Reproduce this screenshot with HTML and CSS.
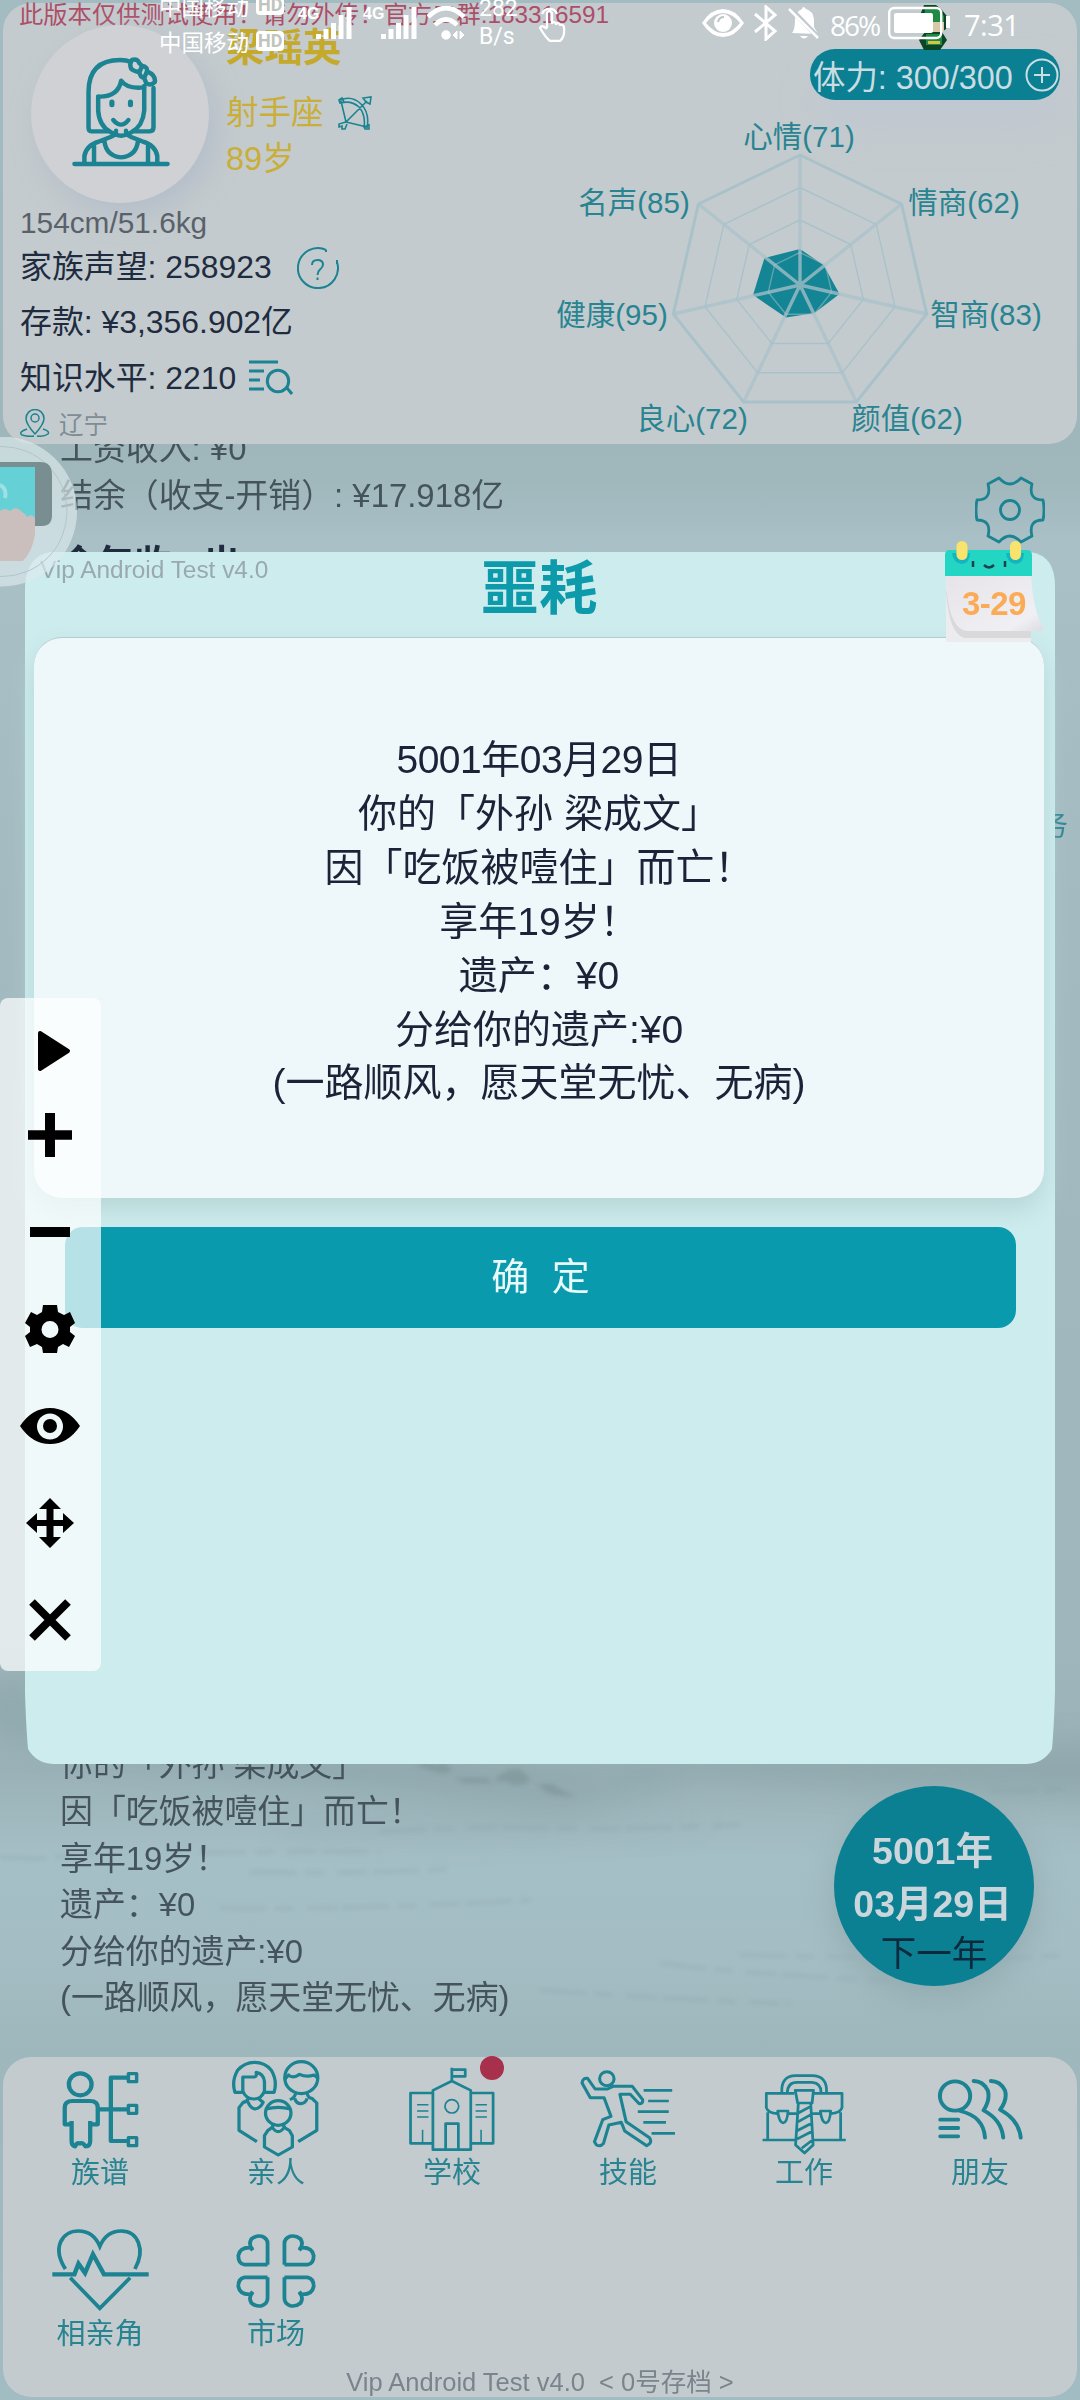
FILE: index.html
```html
<!DOCTYPE html>
<html lang="zh-CN">
<head>
<meta charset="utf-8">
<title>噩耗</title>
<link rel="stylesheet" href="styles.css">
</head>
<body>
<div class="app">
  <svg class="scenery" viewBox="0 1650 1080 420" preserveAspectRatio="none">
    <defs>
      <filter id="mist" x="-20%" y="-60%" width="140%" height="220%"><feGaussianBlur stdDeviation="14"/></filter>
      <filter id="ink" x="-20%" y="-60%" width="140%" height="220%"><feGaussianBlur stdDeviation="2"/></filter>
    </defs>
    <g filter="url(#mist)" fill="#829ca1" opacity=".4">
      <path d="M-40 1690L30 1670L60 1740L400 1755Q560 1760 700 1785L560 1812Q380 1790 250 1775L0 1740Z"/>
      <path d="M620 1755Q900 1750 1120 1740V1800Q850 1790 620 1770Z"/>
      <path d="M280 1815Q440 1800 720 1822Q560 1850 280 1835Z" opacity=".4"/>
    </g>
    <g filter="url(#ink)" fill="#74898e" opacity=".42">
      <path d="M415 1765l12-3 8 3 8-3 9 6-4 5h-10l-8-3z"/><path d="M496 1777l8-4 6-4 10 0 6 5 4 6-5 4-12 1-8-4-8 1z"/><path d="M455 1778h30l10 5h-30z"/><path d="M538 1784h14l6 4 18 9-22-2-8-3z"/>
    </g>
    <g fill="none" stroke="#829aa0" stroke-width="2.500" opacity=".32" filter="url(#ink)" stroke-dasharray="46 9 18 14 30 6">
      <path d="M380 1832q80-6 160-4t200-3M200 1853q90-2 180-1M0 1857q50 4 90-4M250 1872q120 2 210-4M220 1908q150 2 310-8M740 1955q90 2 190 3t140-4M660 1963q70 10 230 18M540 1990q110 8 250 14M990 1790q40 2 80-2"/>
    </g>
  </svg>

  <header class="card profile">
    <p class="notice">此版本仅供测试使用！请勿外传！官方二群:183316591</p>
    <div class="profile-body">
      <section class="facts">
        <div class="identity">
          <div class="avatar">
            <svg viewBox="203 165 288 330" preserveAspectRatio="none" fill="none" stroke="#1b8391" stroke-width="13" stroke-linecap="round" stroke-linejoin="round">
              <path d="M213 486H484M242 484V462Q248 428 286 418L318 405Q335 398 334 386M454 484V462Q448 428 410 418L378 405Q362 398 363 386M270 432V482M427 432V482M300 416Q305 462 349 466Q393 462 398 416"/>
              <path d="M282 284V326Q285 372 318 390Q348 412 380 390Q412 372 416 326V252"/>
              <path d="M282 284Q340 286 349 236Q366 262 416 256M310 388H262Q254 388 254 376V270Q254 174 346 174Q364 174 378 180M388 388H432Q443 388 443 376V258"/>
              <path d="M380 174Q396 168 402 184L410 192Q426 194 424 208Q450 220 447 240Q436 252 422 244L416 228Q404 226 402 210Q386 208 378 200Q372 184 380 174M402 210L410 192M416 228L424 208"/>
              <path d="M322 300V308M376 300V308" stroke-width="15"/><path d="M326 354Q349 382 370 354"/>
            </svg>
          </div>
          <div class="who">
            <h1>梁瑶英</h1>
            <p>射手座 <svg class="zodiac" viewBox="0 0 34 34" fill="none" stroke="#1b8391" stroke-width="1.6"><path d="M2 4Q14-1 23 8Q32 17 29 32M3 7Q13 4 21 11Q28 19 26 32M3 5L8 26M8 26L29 5M8 26L29 31M28 6L25 2L33 1L32 8ZM8 26L1 28L1 31L4 30L4 33L7 33L9 28M1 4L4 2L6 6L2 7ZM26 31L31 29L31 33L27 33Z"/></svg></p>
            <p>89岁</p>
          </div>
        </div>
        <p class="body-size">154cm/51.6kg</p>
        <p class="fact">家族声望: 258923 <svg class="help" viewBox="0 0 42 42" fill="none" stroke="#1b8391" stroke-width="2"><path d="M29 2.8A20 20 0 1 0 40 15M29 2.8V5M40 13V17"/><path d="M15 18Q15 13 20.500 13Q26 13 26 17.500Q26 20 23 22.500Q20.500 24.500 20.500 28M20.500 30.500V33"/></svg></p>
        <p class="fact">存款: ¥3,356.902亿</p>
        <p class="fact">知识水平: 2210 <svg class="lookup" viewBox="0 0 44 36" fill="none" stroke="#1b8391" stroke-width="3"><path d="M0 2H29M0 11H15M0 20H11M0 29H15M38 28L43 34"/><circle cx="29" cy="21" r="10.700"/></svg></p>
        <p class="place"><svg viewBox="0 0 30 28" fill="none" stroke="#1b8391" stroke-width="1.500"><path d="M15 25Q6 15 6 9.500A9 9 0 0 1 24 9.500Q24 15 15 25Z"/><circle cx="15" cy="9" r="4"/><path d="M7 20Q-2 23 2 26Q8 28 14 27M17 27Q24 28 28 25Q30 22 23 20"/></svg>辽宁</p>
      </section>
      <section class="stats">
        <div class="energy">体力: 300/300
          <svg viewBox="0 0 34 34" fill="none" stroke="#c9dde2" stroke-width="2"><circle cx="17" cy="17" r="15.500"/><path d="M17 9V25M9 17H25"/></svg>
        </div>
        <svg class="radar" viewBox="540 100 536 344">
          <path d="M801 249L824.500 265L840.500 294L815.500 313L787 317.500L754 295L765.500 258Z" fill="#148594"/>
          <g fill="none" stroke="#a9c2ca" stroke-linejoin="round">
            <path stroke-width="3" d="M801 155L902.600 204L927.700 314L857.400 402H744.600L674.300 314L699.400 204Z"/>
            <path stroke-width="1.400" d="M801 187.500L877.200 224.300L896 306.700L843.300 372.800H758.700L706 306.700L724.800 224.300ZM801 220L851.800 244.500L864.400 299.500L829.200 343.500H772.800L737.700 299.500L750.200 244.500Z"/>
            <path stroke-width="1.400" opacity=".5" d="M801 252.500L826.400 264.800L832.700 292.200L815.100 314.300H786.900L769.300 292.200L775.600 264.800Z"/>
            <path stroke-width="3.400" opacity=".75" d="M801 285V155M801 285L902.600 204M801 285L927.700 314M801 285L857.400 402M801 285L744.600 402M801 285L674.300 314M801 285L699.400 204"/>
          </g>
          <g class="radar-labels" text-anchor="middle">
            <text x="800" y="147">心情(71)</text><text x="635" y="213">名声(85)</text><text x="965" y="213">情商(62)</text>
            <text x="613" y="325">健康(95)</text><text x="987" y="325">智商(83)</text><text x="693" y="429">良心(72)</text><text x="908" y="429">颜值(62)</text>
          </g>
        </svg>
      </section>
    </div>
  </header>

  <main class="feed">
    <div class="log income">
      <p>工资收入: ¥0</p>
      <p>结余（收支-开销）: ¥17.918亿</p>
      <p class="log-title">今年收 出</p>
    </div>
    <div class="log obituary">
      <p>你的「外孙 梁成文」</p>
      <p>因「吃饭被噎住」而亡！</p>
      <p>享年19岁！</p>
      <p>遗产：¥0</p>
      <p>分给你的遗产:¥0</p>
      <p>(一路顺风，愿天堂无忧、无病)</p>
    </div>
    <span class="side-task">任务</span>
    <svg class="settings" viewBox="-35 -35 70 70" fill="none" stroke="#1b8391" stroke-width="2.800" stroke-linejoin="round"><path d="M-11-32Q0-20 11-32L22-26Q18-10 33-10Q35 0 33 10Q18 10 22 26L11 32Q0 20-11 32L-22 26Q-18 10-33 10Q-35 0-33-10Q-18-10-22-26Z"/><circle r="9.500"/></svg>
    <div class="next-year"><b>5001年</b><b>03月29日</b><span>下一年</span></div>
  </main>

  <nav class="card menu">
    <div class="menu-grid">
      <div class="item"><svg viewBox="151 60 279 288" preserveAspectRatio="none" stroke-width="12.500">
        <circle cx="233" cy="130" r="33"/><path d="M206 250H188V200Q188 180 210 180H262Q284 180 284 200V250H262V300Q262 316 248 316Q240 302 232 308Q224 302 218 316Q208 314 208 300V240M262 240V252M284 205H372M322 205V110H372M322 205V300H372"/><path d="M373 98H397V122H373ZM373 193H397V217H373ZM373 290H397V314H373Z" stroke-width="10"/></svg><span>族谱</span></div>
      <div class="item"><svg viewBox="662 60 279 288" preserveAspectRatio="none" stroke-width="9.500">
        <path d="M710 154H682Q672 120 690 88Q710 64 739 64Q770 64 788 88Q806 120 796 154H768M705 150V108H738Q746 108 744 94Q766 98 768 122V150Q760 174 737 174Q714 174 705 150M720 174Q718 182 706 184L694 200V268L746 302M752 174L764 184Q756 202 740 204Q726 200 720 182"/>
        <circle cx="875" cy="110" r="48"/><path d="M826 116L838 102Q850 114 870 100Q890 110 912 102L924 112M858 158Q856 170 842 176M892 158Q896 172 906 172L920 186V268L866 302M856 172Q860 188 874 188Q888 186 892 172"/>
        <circle cx="808" cy="216" r="37"/><path d="M772 204Q808 194 844 204M793 252Q792 260 778 268L768 284V318L808 342L849 318V284L840 268Q826 262 822 252M790 258Q808 286 826 258"/></svg><span>亲人</span></div>
      <div class="item"><svg viewBox="1173 60 279 288" preserveAspectRatio="none" stroke-width="8">
        <path d="M1257 326V148L1312 120L1367 148V326ZM1256 156H1192V307H1256M1368 156H1432V307H1368M1312 118V80M1312 86H1351V106H1312M1294 322V248H1331V322"/><circle cx="1312" cy="196" r="20" stroke-width="5"/><path stroke-width="4.500" d="M1211 191H1244M1211 210H1244M1211 228H1244M1381 191H1414M1381 210H1414M1381 228H1414M1227 266V304M1397 266V304"/></svg><i class="badge"></i><span>学校</span></div>
      <div class="item"><svg viewBox="116 60 279 288" preserveAspectRatio="none" stroke-width="9">
        <circle cx="194" cy="113" r="21"/><path d="M212 136H268L298 176Q300 188 288 188L262 160H232L250 242L318 290Q328 306 310 314L246 270L236 244L200 252L184 308Q176 318 164 312L158 302L182 236L206 226L186 170H146L122 126Q124 110 138 112L160 144H196Z"/><path stroke-width="8" d="M301 148H384M314 180H374M284 212H374M300 244H366M324 277H392"/></svg><span>技能</span></div>
      <div class="item"><svg viewBox="627 60 279 288" preserveAspectRatio="none" stroke-width="8">
        <path d="M702 154Q700 104 742 104H790Q834 104 832 154M718 154Q720 124 745 124H790Q816 126 816 154M738 157H657V200Q662 216 688 218M796 157H877V200Q872 216 844 218M720 218H744M788 218H814M661 214V297M873 214V297M646 297H742M794 297H888M741 148H794L790 186H748ZM750 187L742 312L768 336L793 312L786 187M690 210H720Q718 244 706 246Q694 244 690 210ZM814 210H844Q842 244 830 246Q818 244 814 210ZM750 216L786 196M746 244L788 220M745 270L790 246M743 296L792 270M760 322L792 296"/></svg><span>工作</span></div>
      <div class="item"><svg viewBox="1138 60 279 288" preserveAspectRatio="none" stroke-width="11.500" stroke-linecap="round">
        <circle cx="1205" cy="165" r="44"/><path d="M1220 210Q1288 226 1292 290M1259 120Q1286 120 1300 148Q1308 176 1288 208Q1340 236 1345 290M1309 120Q1336 120 1350 148Q1358 176 1336 206Q1390 236 1396 290M1162 236H1214M1162 261H1214M1162 286H1214"/></svg><span>朋友</span></div>
      <div class="item"><svg class="sharp" viewBox="151 543 279 288" preserveAspectRatio="none" stroke-width="11">
        <path d="M190 684C150 620 180 570 228 570C262 570 280 592 290 616C300 592 318 570 352 570C400 570 424 625 392 684M204 710L290 802L378 710"/><path stroke-width="13" d="M152 700H216L228 668L247 696L270 640L302 700H432"/></svg><span>相亲角</span></div>
      <div class="item"><svg viewBox="662 543 279 288" preserveAspectRatio="none" stroke-width="11">
        <path d="M777 671H710Q692 668 692 644Q696 620 724 620Q728 620 734 628M734 626Q720 612 730 594Q744 582 760 586Q777 592 777 608V671"/><path d="M826 671H893Q911 668 911 644Q907 620 879 620Q875 620 869 628M869 626Q883 612 873 594Q859 582 843 586Q826 592 826 608V671M777 709H710Q692 712 692 736Q696 760 724 760Q728 760 734 752M734 754Q720 768 730 786Q744 798 760 794Q777 788 777 772V709M826 709H893Q911 712 911 736Q907 760 879 760Q875 760 869 752M869 754Q883 768 873 786Q859 798 843 794Q826 788 826 772V709"/></svg><span>市场</span></div>
    </div>
    <footer>Vip Android Test v4.0&nbsp; &lt; 0号存档 &gt;</footer>
  </nav>

  <div class="dialog" role="dialog">
    <span class="version">Vip Android Test v4.0</span>
    <h2>噩耗</h2>
    <div class="message">
      <p class="date">5001年03月29日</p>
      <p>你的「外孙 梁成文」</p>
      <p>因「吃饭被噎住」而亡！</p>
      <p>享年19岁！</p>
      <p>遗产：¥0</p>
      <p>分给你的遗产:¥0</p>
      <p>(一路顺风，愿天堂无忧、无病)</p>
    </div>
    <button class="confirm">确 定</button>
    <div class="calendar">
      <svg viewBox="0 0 100 102">
        <defs><linearGradient id="paper" x1="0" y1="0" x2="1" y2="1"><stop offset="0" stop-color="#e6e4e9"/><stop offset=".8" stop-color="#f0eff3"/><stop offset="1" stop-color="#dddce0"/></linearGradient></defs>
        <path d="M1 34H86V101H1Z" fill="#ececee"/><path d="M1 50Q4 94 20 97H86V80Z" fill="#d9d9dc"/>
        <path d="M1 34H86Q88 70 98 86Q99 90 94 90H22Q2 88 1 34Z" fill="url(#paper)"/>
        <path d="M0 35V14Q0 9 5 9H82Q87 9 87 14V35Z" fill="#22d6c3"/>
        <path d="M7 12Q8 22 17 23Q25 22 25 12ZM61 12Q62 22 71 23Q79 22 79 12Z" fill="#15b5c0"/>
        <rect x="11.500" y="0" width="11" height="19" rx="5.500" fill="#fae36d"/><rect x="65" y="0" width="11" height="19" rx="5.500" fill="#fae36d"/>
        <path d="M28 20V26M60 20V26M39 24Q44 29 49 24" fill="none" stroke="#21414c" stroke-width="2.500"/>
      </svg>
      <b>3-29</b>
    </div>
  </div>

  <div class="float-ball">
    <svg viewBox="0 437 80 150">
      <circle cx="2" cy="511.500" r="75" fill="#dce9ec" opacity=".68"/><circle cx="2" cy="511.500" r="65" fill="none" stroke="#b3c5ca" stroke-width="1"/>
      <path d="M0 462H40Q52 462 52 475V515Q52 526 42 526H0Z" fill="#788e90"/><path d="M0 467H35V520H0Z" fill="#66d0d7"/>
      <path d="M0 485Q7 488 5 498" fill="none" stroke="#9fe0e4" stroke-width="4"/>
      <path d="M0 511Q5 507 10 511Q16 505 22 512Q26 514 27 517Q32 513 35 518V535Q32 552 23 561H0Z" fill="#cbbfbd"/>
    </svg>
  </div>

  <aside class="toolbar">
    <svg viewBox="0 0 60 50"><path d="M20 7L48 25L20 43Z" stroke="#000" stroke-width="4" stroke-linejoin="round"/></svg>
    <svg viewBox="0 0 60 50"><path d="M8 25H52" stroke="#000" stroke-width="9.500"/><path d="M30 3V47" stroke="#000" stroke-width="10"/></svg>
    <svg viewBox="0 0 60 50"><path d="M10 25H50" stroke="#000" stroke-width="10" /></svg>
    <svg viewBox="0 0 60 50"><path fill-rule="evenodd" d="M23 1H37L38 8L44 11L50 8L55 19L50 23V28L55 32L49 43L43 40L38 43L37 49H23L22 43L17 40L10 43L5 32L10 28V23L5 19L11 8L17 11L22 8ZM30 17A8.500 8.500 0 1 0 30 34A8.500 8.500 0 1 0 30 17Z"/></svg>
    <svg viewBox="0 0 60 50"><path fill-rule="evenodd" d="M0 25Q12 7 30 7Q48 7 60 25Q48 43 30 43Q12 43 0 25ZM30 12.500A13 13 0 1 0 30 38.500A13 13 0 1 0 30 12.500Z"/><circle cx="30" cy="25" r="7"/></svg>
    <svg viewBox="0 0 60 50"><path d="M30 0L41 11H33.500V22H43V15L54 25L43 35V28H33.500V39H41L30 50L19 39H26.500V28H17V35L6 25L17 15V22H26.500V11H19Z"/></svg>
    <svg viewBox="0 0 60 50"><path d="M12 7L48 43M48 7L12 43" stroke="#000" stroke-width="8"/></svg>
  </aside>

  <div class="status">
    <div class="carriers"><span>中国移动<b>HD</b></span><span>中国移动<b>HD</b></span></div>
    <div class="signal"><b>4G</b><svg viewBox="0 0 36 32"><path d="M0 27h5v5H0zM7.500 22h5v10h-5zM15 16h5v16h-5zM22.500 8h5v24h-5zM30.500 0h5v32h-5z"/></svg></div>
    <div class="signal"><b>4G</b><svg viewBox="0 0 36 32"><path d="M0 27h5v5H0zM7.500 22h5v10h-5zM15 16h5v16h-5zM22.500 8h5v24h-5zM30.500 0h5v32h-5z"/></svg></div>
    <svg class="wifi" viewBox="0 0 38 34" fill="none" stroke="#fff" stroke-width="4.500"><path d="M1 11Q19-7 37 11M8 19Q19 8 30 19"/><circle cx="19" cy="29" r="2.500"/><path stroke-width="1" fill="#fff" d="M26 29l4-4v8zM37 29l-4-4v8z"/></svg>
    <div class="rate"><span>282</span><span>B/s</span></div>
    <svg class="hand" viewBox="0 0 28 38" fill="none" stroke="#fff" stroke-width="2.300" stroke-linejoin="round"><path d="M4 10A8 8 0 0 1 19 10M9 24V9Q11 5 14 9V19Q17 17 18 20Q21 18 22 21Q26 20 26 24Q27 33 22 37H12Q8 34 2 24Q4 20 9 25"/></svg>
    <span class="spacer"></span>
    <svg class="watching" viewBox="0 0 42 28"><path fill="#fff" fill-rule="evenodd" d="M0 14Q9 0 21 0T42 14Q33 28 21 28T0 14ZM4 14Q12 24 21 24T38 14Q30 4 21 4T4 14Z"/><circle cx="21" cy="14" r="9" fill="#fff"/><path d="M16 13Q17 8 22 8" stroke="#bcc5c8" stroke-width="2" fill="none"/></svg>
    <svg class="bluetooth" viewBox="0 0 24 36" fill="none" stroke="#fff" stroke-width="3"><path d="M1 9L21 26L12 34V2L21 10L1 27"/></svg>
    <svg class="muted" viewBox="0 0 32 36"><path fill="#fff" d="M4 28Q7 25 7 14Q8 6 14 4Q15 0 18 4Q25 6 26 14V22L30 29ZM12 31H20Q16 36 12 31Z"/><path d="M1 2L31 33" stroke="#c3cacd" stroke-width="5"/><path d="M1 4L30 33" stroke="#fff" stroke-width="2.500"/></svg>
    <span class="percent">86%</span>
    <svg class="battery" viewBox="0 0 64 46">
      <path fill="#0e4426" d="M36 1h12l6 5 8 10-4 9-4 3 5 8-7 10H36l-5-10 6-8-6-14z"/><path fill="#d8c8a8" d="M36 18h20v10H38z"/><path fill="#1e8a44" d="M37 3h11l8 9v6H36zM38 30h16v11H38z"/><path fill="#d2c44a" d="M40 37h12v3H40z"/>
      <rect x="1.200" y="4" width="52" height="30" rx="5" fill="none" stroke="#fff" stroke-width="2.400"/><rect x="6" y="9" width="39" height="20" rx="2" fill="#fff"/><path d="M60 12V24" stroke="#fff" stroke-width="4"/>
    </svg>
    <span class="clock">7:31</span>
  </div>
</div>
</body>
</html>
```
FILE: styles.css
```css
* { box-sizing: border-box; margin: 0; padding: 0; }
body {
  font-family: "Liberation Sans", "Noto Sans CJK SC", sans-serif;
  background: #a2bac0;
}
svg { display: block; flex: none; }
.app {
  position: relative;
  width: 1080px;
  height: 2400px;
  overflow: hidden;
  padding: 3px;
  display: flex;
  flex-direction: column;
  background: linear-gradient(#a3bcc2 0, #9fb7bb 440px, #a0b8bc 480px, #a8c0c6 540px, #a3bac0 900px, #9fb7bc 1640px, #9ab2b7 1770px, #a5bfc6 1860px, #a4bdc4 1960px, #9eb7bc 2050px, #a1bcc2 2400px);
}
.scenery { position: absolute; left: 0; top: 1650px; width: 1080px; height: 420px; }
.card { position: relative; background: #c4cbce; border-radius: 28px; }

/* profile */
.profile { height: 441px; flex: none; }
.notice { height: 22px; line-height: 23px; padding-left: 16px; font-size: 24.3px; color: #ad4e68; white-space: nowrap; }
.profile-body { display: grid; grid-template-columns: 536px 536px; height: 419px; }
.facts { padding-left: 17px; color: #1f2c40; }
.identity { display: flex; height: 180px; }
.avatar {
  width: 178px; height: 178px; margin-left: 11px; border-radius: 50%;
  background: #cfd1d5; box-shadow: 8px 12px 30px #b4bec9;
  padding: 32px 0 0 40px; flex: none;
}
.avatar svg { width: 99px; height: 110px; }
.who { margin-left: 17px; color: #c9ae38; white-space: nowrap; }
.who h1 { font-size: 38.5px; line-height: 46px; margin-bottom: 19px; color: #c4a92b; }
.who p { font-size: 32.5px; line-height: 46px; height: 46px; display: flex; align-items: center; gap: 14px; }
.zodiac { width: 34px; height: 34px; }
.body-size { font-size: 29.8px; line-height: 35px; color: #59626b; }
.fact { height: 55.3px; line-height: 55.3px; font-size: 31.9px; display: flex; align-items: center; white-space: nowrap; }
.help { width: 42px; height: 42px; margin-left: 25px; }
.lookup { width: 44px; height: 36px; margin-left: 13px; }
.place { height: 35px; font-size: 24.5px; display: flex; align-items: center; gap: 9px; color: #7e8c96; }
.place svg { width: 30px; height: 28px; }
.stats { padding-top: 24px; display: flex; flex-direction: column; }
.energy {
  align-self: flex-end; margin-right: 15px; width: 250px; height: 51px; border-radius: 25px;
  background: #0b8092; color: #c9dde2; font-size: 32.4px; padding: 0 1px 0 3px;
  display: flex; align-items: center; justify-content: space-between; white-space: nowrap;
  box-shadow: 8px 26px 44px #bfc7d2;
}
.energy svg { width: 34px; height: 34px; }
.radar { width: 536px; height: 344px; }
.radar-labels { font-size: 29.5px; fill: #298491; }

/* feed behind the dialog */
.feed { position: relative; flex: 1; overflow: hidden; padding: 0 57px 35px; display: flex; flex-direction: column; justify-content: space-between; }
.log { font-size: 32.9px; line-height: 46.6px; color: #45545c; white-space: nowrap; }
.income { margin-top: -18px; }
.log-title { font-size: 37px; font-weight: bold; margin-top: 23px; color: #1f2c40; word-spacing: 22px; }
.side-task { position: absolute; right: 9px; top: 364px; font-size: 29px; line-height: 36px; color: #298491; }
.settings { position: absolute; left: 972px; top: 31px; width: 70px; height: 70px; }
.next-year {
  position: absolute; left: 831px; top: 1342px; width: 200px; height: 200px; border-radius: 50%;
  background: #0b8092; display: flex; flex-direction: column; align-items: center; padding-top: 39px;
  box-shadow: 0 12px 34px #92abb0;
}
.next-year b { font-size: 37.5px; line-height: 53px; color: #cbd6dc; white-space: nowrap; margin-left: -3px; }
.next-year span { font-size: 35.5px; line-height: 46px; color: #0b2a3d; }

/* bottom menu */
.menu { height: 340px; flex: none; padding: 4px 9px 0; }
.menu-grid { display: grid; grid-template-columns: repeat(6, 176px); grid-auto-rows: 161px; }
.item { position: relative; display: flex; flex-direction: column; align-items: center; color: #298491; }
.item svg { width: 96px; height: 96px; fill: none; stroke: #1b8391; stroke-linejoin: round; overflow: visible; }
.item svg.sharp { stroke-linejoin: miter; }
.item span { font-size: 29px; line-height: 32px; }
.badge { position: absolute; left: 116px; top: -5px; width: 24px; height: 24px; border-radius: 50%; background: #a7304c; }
.menu footer { font-size: 25.5px; line-height: 28px; margin-top: -15px; text-align: center; color: #7a848c; }

/* dialog */
.dialog { position: absolute; left: 24px; top: 552px; width: 1031px; height: 1212px; padding: 0 11px 0 10px; }
.dialog::before {
  content: ""; position: absolute; inset: 0; background: #cdecee;
  clip-path: path("M26 0H1007Q1031 4 1031 34V1140Q1030 1175 1028 1197Q1020 1211 1003 1212H29Q12 1211 4 1197Q2 1175 1 1140V34Q3 4 26 0Z");
}
.dialog > * { position: relative; }
.version { display: block; height: 32px; line-height: 36px; margin-left: 6px; font-size: 24.4px; color: #99a9ad; }
.dialog h2 { height: 53px; line-height: 9px; text-align: center; font-size: 58.5px; color: #0d9bab; }
.message {
  height: 561px; border-radius: 28px; background: #eef7f9; padding-top: 95px; text-align: center;
  font-size: 39px; line-height: 53.9px; color: #1c2237; border-top: 1px solid #b5cccf; box-shadow: 0 12px 26px #b8d6d6;
}
.date { letter-spacing: -.5px; }
.confirm {
  display: block; width: 951px; height: 101px; margin: 29px 0 0 31px; border: 0; border-radius: 18px; padding-bottom: 8px;
  background: #099bad; color: #eaf9fa; font: 38px "Liberation Sans", "Noto Sans CJK SC", sans-serif; word-spacing: 12px;
}
.dialog .calendar { position: absolute; left: 921px; top: -11px; width: 100px; height: 102px; }
.calendar svg { width: 100px; height: 102px; }
.calendar b { position: absolute; left: 17px; top: 45px; font-size: 33px; line-height: 36px; letter-spacing: -.6px; color: #fbab55; white-space: nowrap; }

/* floating controls */
.float-ball { position: absolute; left: 0; top: 437px; width: 80px; height: 150px; }
.toolbar {
  position: absolute; left: 0; top: 998px; width: 101px; height: 673px; border-radius: 8px;
  background: rgba(255, 255, 255, .7); display: flex; flex-direction: column; align-items: center; gap: 47px; padding: 28px 1px 0 0;
}
.toolbar svg { width: 60px; height: 50px; }
.toolbar svg:first-child { margin-bottom: -13px; }

/* system status bar */
.status { position: absolute; left: 159px; top: 0; width: 857px; height: 56px; display: flex; color: #fff; font-family: Roboto, "Noto Sans CJK SC", sans-serif; }
.carriers { width: 139px; margin-top: -13px; }
.carriers span { display: flex; align-items: center; gap: 7px; height: 36px; font-size: 22.5px; }
.carriers b { background: #fff; color: #bfc5bd; border-radius: 4px; font-size: 18px; line-height: 20px; padding: 0 2px; }
.signal { width: 65px; position: relative; padding: 7px 0 0 18px; }
.signal b { position: absolute; left: 0; top: 5px; font: bold 16px/18px "Liberation Sans", sans-serif; }
.signal svg { width: 36px; height: 32px; fill: #fff; }
.wifi { width: 38px; height: 34px; margin: 6px 14px 0 -1px; }
.rate { width: 59px; font-size: 23px; line-height: 28px; display: flex; flex-direction: column; margin-top: -5px; }
.hand { width: 28px; height: 38px; margin-top: 4px; }
.spacer { flex: 1; }
.watching { width: 42px; height: 28px; margin: 9px 10px 0 0; }
.bluetooth { width: 24px; height: 36px; margin: 5px 10px 0 0; }
.muted { width: 32px; height: 36px; margin: 5px 10px 0 0; }
.percent { width: 58px; font: 28px/50px "Open Sans", sans-serif; letter-spacing: -2px; white-space: nowrap; }
.battery { width: 64px; height: 46px; margin: 4px 12px 0 0; }
.clock { width: 52px; font: 29px/50px "Open Sans", sans-serif; letter-spacing: -.5px; white-space: nowrap; }
```
